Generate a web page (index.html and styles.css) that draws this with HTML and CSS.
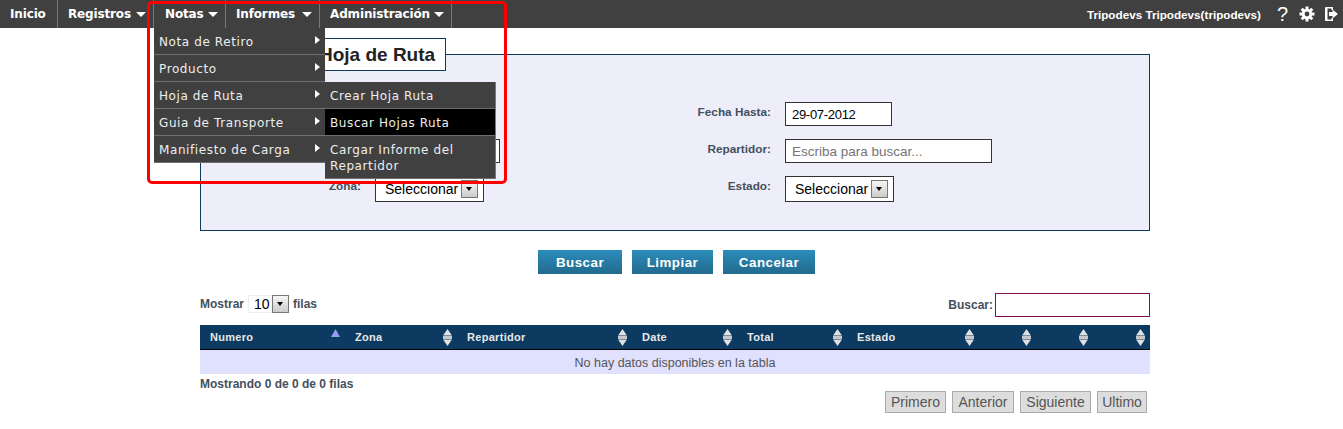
FILE: index.html
```html
<!DOCTYPE html>
<html lang="en">
<head>
    <meta charset="UTF-8">
    <meta name="viewport" content="width=device-width, initial-scale=1.0">
    <title>Buscar Hojas de Ruta</title>
    <link rel="stylesheet" href="styles.css">
</head>
<body>
    <header class="topbar">
        <nav class="mainmenu">
            <a class="menu-item m-inicio">Inicio</a>
            <a class="menu-item has-caret m-registros">Registros</a>
            <div class="menu-wrap">
                <a class="menu-item has-caret m-notas">Notas</a>
                <ul class="dropdown">
                    <li class="has-sub">Nota de Retiro</li>
                    <li class="has-sub">Producto</li>
                    <li class="has-sub">Hoja de Ruta
                        <ul class="dropdown submenu">
                            <li>Crear Hoja Ruta</li>
                            <li class="active">Buscar Hojas Ruta</li>
                            <li>Cargar Informe del Repartidor</li>
                        </ul>
                    </li>
                    <li class="has-sub">Guia de Transporte</li>
                    <li class="has-sub">Manifiesto de Carga</li>
                </ul>
            </div>
            <a class="menu-item has-caret m-informes">Informes</a>
            <a class="menu-item has-caret m-admin">Administración</a>
        </nav>
        <div class="userbar">
            <span class="username">Tripodevs Tripodevs(tripodevs)</span>
            <span class="help">?</span>
            <svg class="icon-gear" width="16" height="16" viewBox="0 0 16 16">
                <g stroke="#fff" stroke-width="3">
                    <line x1="8" y1="0.5" x2="8" y2="15.5"/>
                    <line x1="0.5" y1="8" x2="15.5" y2="8"/>
                    <line x1="2.7" y1="2.7" x2="13.3" y2="13.3"/>
                    <line x1="13.3" y1="2.7" x2="2.7" y2="13.3"/>
                </g>
                <circle cx="8" cy="8" r="5.300" fill="#fff"/>
                <circle cx="8" cy="8" r="2.400" fill="#404040"/>
            </svg>
            <svg class="icon-logout" width="13" height="14" viewBox="0 0 13 14">
                <path fill="#fff" d="M1 0h7v3H6.500V1.500h-4v11h4V11H8v3H1a1 1 0 0 1-1-1V1a1 1 0 0 1 1-1z"/>
                <path fill="#fff" d="M7.500 2.500L13 7l-5.500 4.500V9H4V5h3.500z"/>
            </svg>
        </div>
    </header>

    <div class="annotation"></div>

    <main class="content">
        <fieldset class="filters">
            <legend>Hoja de Ruta</legend>
            <div class="filter-grid">
                <label></label>
                <input class="text-input date-input" type="text">
                <label>Fecha Hasta:</label>
                <input class="text-input date-input" type="text" value="29-07-2012">

                <label></label>
                <input class="text-input wide-left" type="text">
                <label>Repartidor:</label>
                <input class="text-input wide-input" type="text" placeholder="Escriba para buscar...">

                <label>Zona:</label>
                <div class="select-box"><span>Seleccionar</span><i class="select-btn"></i></div>
                <label>Estado:</label>
                <div class="select-box"><span>Seleccionar</span><i class="select-btn"></i></div>
            </div>
        </fieldset>

        <div class="actions">
            <button class="btn">Buscar</button>
            <button class="btn">Limpiar</button>
            <button class="btn">Cancelar</button>
        </div>

        <div class="table-tools">
            <div class="length-box">
                Mostrar
                <div class="length-select"><span>10</span><i class="select-btn"></i></div>
                filas
            </div>
            <div class="search-box">
                <label>Buscar:</label>
                <input class="search-input" type="text">
            </div>
        </div>

        <table class="data-table">
            <colgroup>
                <col class="c1"><col class="c2"><col class="c3"><col class="c4"><col class="c5">
                <col class="c6"><col class="c7"><col class="c7"><col class="c7">
            </colgroup>
            <thead>
                <tr>
                    <th><div class="th-in">Numero <svg class="sort-asc" width="9" height="8" viewBox="0 0 9 8"><path fill="#9a9af5" d="M4.500 0L9 8H0z"/></svg></div></th>
                    <th><div class="th-in">Zona <svg width="9" height="17" viewBox="0 0 9 17"><use href="#sort"/></svg></div></th>
                    <th><div class="th-in">Repartidor <svg width="9" height="17" viewBox="0 0 9 17"><use href="#sort"/></svg></div></th>
                    <th><div class="th-in">Date <svg width="9" height="17" viewBox="0 0 9 17"><use href="#sort"/></svg></div></th>
                    <th><div class="th-in">Total <svg width="9" height="17" viewBox="0 0 9 17"><use href="#sort"/></svg></div></th>
                    <th><div class="th-in">Estado <svg width="9" height="17" viewBox="0 0 9 17"><use href="#sort"/></svg></div></th>
                    <th><div class="th-in"><svg width="9" height="17" viewBox="0 0 9 17"><use href="#sort"/></svg></div></th>
                    <th><div class="th-in"><svg width="9" height="17" viewBox="0 0 9 17"><use href="#sort"/></svg></div></th>
                    <th><div class="th-in"><svg width="9" height="17" viewBox="0 0 9 17"><use href="#sort"/></svg></div></th>
                </tr>
            </thead>
            <tbody>
                <tr><td colspan="9">No hay datos disponibles en la tabla</td></tr>
            </tbody>
        </table>

        <div class="table-info">Mostrando 0 de 0 de 0 filas</div>

        <div class="pager">
            <a class="page-btn">Primero</a>
            <a class="page-btn">Anterior</a>
            <a class="page-btn">Siguiente</a>
            <a class="page-btn">Ultimo</a>
        </div>
    </main>

    <svg class="defs" width="0" height="0">
        <symbol id="sort" viewBox="0 0 9 17">
            <path fill="#e0e0e0" d="M4.500 0L9 6.500H0z"/>
            <rect y="7" width="9" height="3" fill="#c4c8cc"/>
            <path fill="#e0e0e0" d="M0 10.500h9L4.500 17z"/>
        </symbol>
    </svg>
</body>
</html>
```

FILE: styles.css
```css
body {
    margin: 0;
    font-family: "Liberation Sans", Arial, sans-serif;
    font-size: 12px;
    color: #44505c;
    background: #fff;
}

/* top bar */
.topbar {
    display: flex;
    justify-content: space-between;
    height: 28px;
    background: #404040;
    color: #fff;
}
.mainmenu {
    display: flex;
}
.menu-wrap {
    position: relative;
}
.menu-item {
    display: flex;
    align-items: center;
    height: 28px;
    padding: 0 10px;
    border-right: 1px solid #77787a;
    font-family: "DejaVu Sans", Verdana, sans-serif;
    font-size: 12px;
    font-weight: bold;
    letter-spacing: -0.15px;
    box-sizing: border-box;
    white-space: nowrap;
}
.m-inicio { width: 58px; }
.m-registros { width: 96px; }
.m-notas { width: 72px; padding-left: 11px; }
.m-informes { width: 94px; }
.m-admin { width: 132px; }
.has-caret {
    padding-right: 7px;
}
.has-caret::after {
    content: "";
    margin-left: auto;
    margin-top: 1px;
    border-left: 5px solid transparent;
    border-right: 5px solid transparent;
    border-top: 5px solid #fff;
}
.userbar {
    display: flex;
    align-items: center;
    padding-right: 5px;
}
.username {
    font-size: 11.700px;
    font-weight: bold;
    margin-right: 16px;
}
.help {
    font-size: 20px;
    margin-right: 11px;
    width: 11px;
}
.icon-gear {
    margin-right: 10px;
}

/* dropdowns */
.dropdown {
    position: absolute;
    top: 28px;
    left: 0;
    z-index: 10;
    width: 171px;
    margin: 0;
    padding: 0;
    list-style: none;
    background: #404040;
    color: #eee;
    font-family: "DejaVu Sans", Verdana, sans-serif;
    font-size: 12px;
    font-weight: normal;
    letter-spacing: 0.6px;
    line-height: 16px;
}
.dropdown li {
    position: relative;
    padding: 6px 5px 4px;
    border-bottom: 1px solid #6f6f72;
}
.dropdown .has-sub::after {
    content: "";
    position: absolute;
    top: 8px;
    right: 5px;
    border-top: 4.500px solid transparent;
    border-bottom: 4.500px solid transparent;
    border-left: 5px solid #fff;
}
.submenu {
    top: 0;
    left: 171px;
    box-sizing: border-box;
    border-right: 1px solid #77777c;
}
.submenu .active {
    background: #000;
}

/* red marker drawn over the menu */
.annotation {
    position: absolute;
    top: 1px;
    left: 147px;
    width: 354px;
    height: 177px;
    border: 3px solid #f00;
    border-radius: 5px;
    z-index: 20;
}

/* form */
.content {
    width: 950px;
    margin-left: 200px;
    padding-top: 10px;
}
.filters {
    margin: 0;
    padding: 31px 0 28px;
    min-inline-size: 0;
    border: 1px solid #0c3a60;
    background: #eeeefa;
}
.filters legend {
    margin-left: 107px;
    padding: 0 10px;
    height: 31px;
    line-height: 31px;
    border: 1px solid #0c3a60;
    background: #fff;
    color: #222;
    font-size: 19px;
    font-weight: bold;
}
.filter-grid {
    display: grid;
    grid-template-columns: 160px 222px 160px 1fr;
    column-gap: 14px;
    row-gap: 13px;
    align-items: start;
}
.filter-grid label {
    text-align: right;
    font-size: 11.800px;
    font-weight: bold;
    padding-top: 3px;
}
.text-input {
    box-sizing: border-box;
    height: 24px;
    padding: 0 6px;
    border: 1px solid #333;
    background: #fff;
    font-family: "Liberation Sans", Arial, sans-serif;
    font-size: 13px;
    letter-spacing: -0.3px;
    color: #000;
}
.text-input::placeholder {
    color: #757575;
    font-size: 13.500px;
    letter-spacing: 0;
}
.date-input {
    width: 107px;
}
.wide-left {
    width: 125px;
}
.wide-input {
    width: 207px;
}
.select-box {
    display: flex;
    align-items: center;
    justify-content: space-between;
    box-sizing: border-box;
    width: 109px;
    height: 26px;
    padding: 0 5px 0 9px;
    border: 1px solid #333;
    background: #fff;
    font-size: 14px;
    color: #000;
}
.select-btn {
    position: relative;
    display: block;
    width: 17px;
    height: 18px;
    box-sizing: border-box;
    border: 1px solid #777;
    background: linear-gradient(#f6f6f6, #cbcbcb);
}
.select-btn::after {
    content: "";
    position: absolute;
    top: 6px;
    left: 4px;
    border-left: 3.500px solid transparent;
    border-right: 3.500px solid transparent;
    border-top: 4px solid #000;
}

.actions {
    display: flex;
    justify-content: center;
    gap: 10px;
    margin-top: 19px;
    padding-left: 3px;
}
.btn {
    height: 24px;
    padding: 0;
    border: none;
    background: linear-gradient(#2b8dbc, #226a8c);
    color: #fff;
    font-family: "Liberation Sans", Arial, sans-serif;
    font-size: 13.330px;
    font-weight: bold;
    letter-spacing: 0.5px;
}
.btn:nth-child(1) { width: 84px; }
.btn:nth-child(2) { width: 81px; }
.btn:nth-child(3) { width: 92px; }

/* table */
.table-tools {
    display: flex;
    justify-content: space-between;
    margin-top: 19px;
    height: 24px;
    font-weight: bold;
}
.length-box {
    display: flex;
    align-items: center;
    gap: 4px;
    height: 20px;
    padding-top: 1px;
}
.length-select {
    display: flex;
    align-items: center;
    justify-content: space-between;
    box-sizing: border-box;
    width: 41px;
    height: 18px;
    padding-left: 5px;
    border: 1px solid #eee;
    border-right: 0;
    background: #fff;
    color: #000;
    font-size: 14px;
    font-weight: normal;
}
.search-box {
    display: flex;
    align-items: center;
    gap: 2px;
}
.search-input {
    box-sizing: border-box;
    width: 155px;
    height: 24px;
    border: 1px solid #80104f;
    background: #fff;
}
.data-table {
    width: 950px;
    margin-top: 8px;
    border-collapse: collapse;
    table-layout: fixed;
}
.c1 { width: 145px; }
.c2 { width: 112px; }
.c3 { width: 175px; }
.c4 { width: 105px; }
.c5 { width: 110px; }
.c6 { width: 132px; }
.c7 { width: 57px; }
.data-table th {
    height: 24px;
    padding: 0 5px 0 10px;
    background: #0c3a60;
    border-bottom: 1px solid #000;
    color: #e8e8e8;
    font-size: 11px;
    font-weight: bold;
    letter-spacing: 0.3px;
    text-align: left;
}
.th-in {
    display: flex;
    align-items: center;
    justify-content: space-between;
}
.th-in svg:only-child {
    margin-left: auto;
}
.sort-asc {
    margin-top: -8px;
}
.data-table td {
    height: 24px;
    padding: 2px 0 0;
    box-sizing: border-box;
    background: #e0e0ff;
    color: #555;
    font-size: 12.500px;
    text-align: center;
}
.defs {
    position: absolute;
}
.table-info {
    margin-top: 3px;
    line-height: 14px;
    font-weight: bold;
}
.pager {
    display: flex;
    justify-content: flex-end;
    gap: 6px;
    padding-right: 3px;
}
.page-btn {
    box-sizing: border-box;
    height: 22px;
    line-height: 21px;
    border: 1px solid #aaa;
    background: #ddd;
    color: #555;
    font-size: 14px;
    text-align: center;
}
.page-btn:nth-child(1) { width: 61px; }
.page-btn:nth-child(2) { width: 62px; }
.page-btn:nth-child(3) { width: 71px; }
.page-btn:nth-child(4) { width: 50px; }
```
